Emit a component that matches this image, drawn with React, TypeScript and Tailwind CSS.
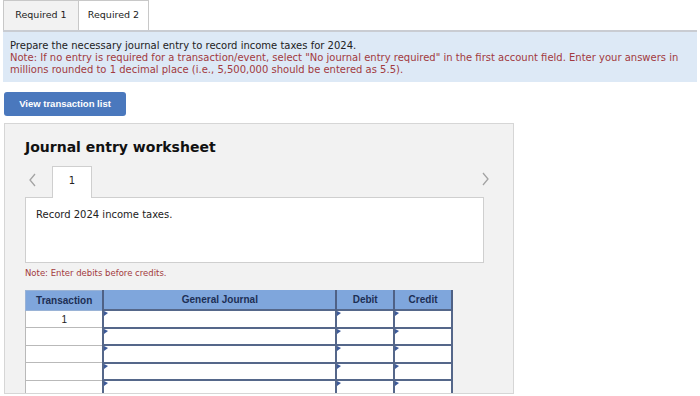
import React from "react";

const rows = ["1", "", "", "", ""];

function Flag() {
  return (
    <svg className="absolute left-0 top-0" width="4" height="5" viewBox="0 0 4 5">
      <polygon points="0,0 4,2 0,5" fill="#3d5a99" />
    </svg>
  );
}

function Chevron({ dir }: { dir: "left" | "right" }) {
  return (
    <svg width="9" height="14" viewBox="0 0 9 14" fill="none" stroke="#a3a3a3" strokeWidth="1.3">
      {dir === "left" ? <polyline points="7,1 2,7 7,13" /> : <polyline points="2,1 7,7 2,13" />}
    </svg>
  );
}

export default function App() {
  return (
    <div className="h-[396px] w-[700px] overflow-hidden bg-white font-['DejaVu_Sans',sans-serif] text-[#222]">
      {/* Tabs */}
      <div className="flex h-[30px] items-end pl-[3px]">
        <div className="flex h-[30px] w-[76px] items-center justify-center border border-b-0 border-[#c8c8c8] bg-[#f2f2f2] text-[9.5px]">
          Required 1
        </div>
        <div className="flex h-[30px] w-[70px] items-center justify-center border border-b-0 border-l-0 border-[#c8c8c8] bg-white text-[9.5px]">
          Required 2
        </div>
      </div>

      {/* Instructions */}
      <div className="ml-[3px] mr-[3px] border-t-2 border-[#c9ccd2] bg-[#dde9f6] px-[7px] pb-[6px] pt-[8px] text-[10px] leading-[12px]">
        <p>Prepare the necessary journal entry to record income taxes for 2024.</p>
        <p className="text-[#a23a40]">
          Note: If no entry is required for a transaction/event, select "No journal entry required" in the first account field. Enter your answers in millions rounded to 1 decimal place (i.e., 5,500,000 should be entered as 5.5).
        </p>
      </div>

      <button className="ml-[4px] mt-[10px] flex h-[24px] w-[122px] items-center justify-center rounded-[3px] bg-[#4a78bd] font-['Liberation_Sans',sans-serif] text-[9.5px] font-bold text-white">
        View transaction list
      </button>

      {/* Worksheet */}
      <div className="ml-[4px] mt-[7px] h-[271px] w-[510px] overflow-hidden border border-[#d6d6d6] bg-[#f2f2f2] pl-[20px] pr-[29px]">
        <h2 className="mt-[14px] text-[14px] font-bold leading-[18px] text-[#111]">Journal entry worksheet</h2>

        <div className="mt-[10px] flex h-[31px] items-end">
          <span className="mb-[10px] ml-[3px] w-[24px]">
            <Chevron dir="left" />
          </span>
          <div className="relative top-[1px] flex h-[32px] w-[40px] items-start justify-center border border-b-0 border-[#cfcfcf] bg-white pt-[6px] text-[10px]">
            1
          </div>
          <span className="mb-[11px] ml-auto mr-[-6px]">
            <Chevron dir="right" />
          </span>
        </div>

        <div className="h-[66px] border border-[#cfcfcf] bg-white px-[10px] pt-[9px] text-[10px]">
          Record 2024 income taxes.
        </div>

        <p className="mt-[4px] text-[8.5px] text-[#a23a40]">Note: Enter debits before credits.</p>

        <table className="mt-[10px] w-[428px] border-collapse font-['Liberation_Sans',sans-serif] text-[10px]">
          <thead>
            <tr className="h-[20px] bg-[#7fa6dc] font-bold text-[#1d2f55]">
              <th className="w-[78px] border border-[#9ab3d6] border-r-2 border-r-[#4f6185]">Transaction</th>
              <th className="w-[234px] border-r-2 border-[#4f6185]">General Journal</th>
              <th className="w-[58px] border-r-2 border-[#4f6185]">Debit</th>
              <th className="w-[58px] border-r-2 border-[#4f6185]">Credit</th>
            </tr>
          </thead>
          <tbody>
            {rows.map((t, i) => (
              <tr key={i} className="h-[17.5px]">
                <td className="border border-[#b9b9b9] bg-white text-center text-[10px] text-[#222]">{t}</td>
                <td className="relative border-2 border-[#55678a] bg-white">
                  <Flag />
                </td>
                <td className="relative border-2 border-[#55678a] bg-white">
                  <Flag />
                </td>
                <td className="relative border-2 border-[#55678a] bg-white">
                  <Flag />
                </td>
              </tr>
            ))}
          </tbody>
        </table>
      </div>
    </div>
  );
}
